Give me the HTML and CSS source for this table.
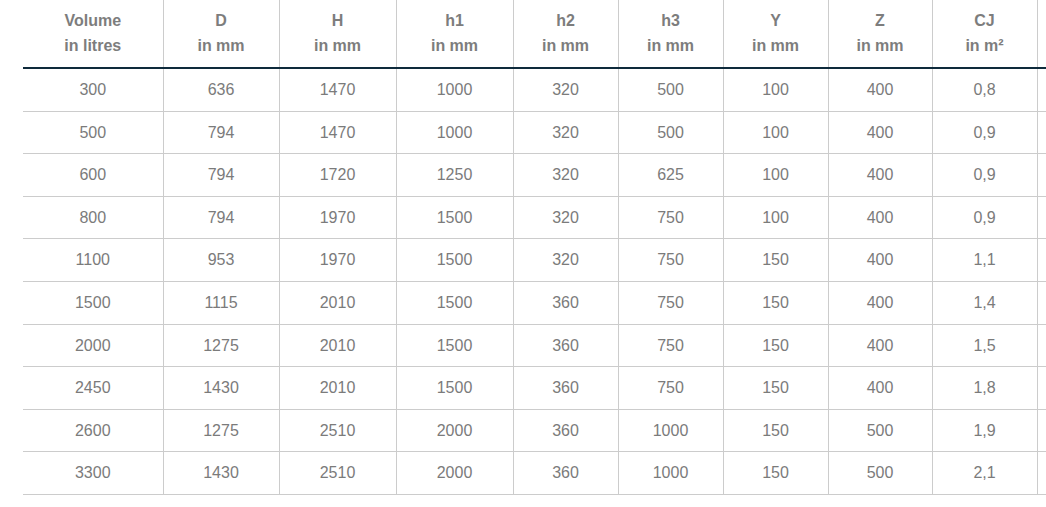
FILE: index.html
```html
<!DOCTYPE html>
<html lang="en">
<head>
<meta charset="utf-8">
<title>Dimensions</title>
<link rel="stylesheet" href="styles.css">
</head>
<body>
<div class="wrap">
<table class="dims">
<colgroup>
<col class="c1"><col class="c2"><col class="c3"><col class="c4"><col class="c5"><col class="c6"><col class="c7"><col class="c8"><col class="c9"><col class="c10">
</colgroup>
<thead>
<tr>
<th>Volume<br>in litres</th>
<th>D<br>in mm</th>
<th>H<br>in mm</th>
<th>h1<br>in mm</th>
<th>h2<br>in mm</th>
<th>h3<br>in mm</th>
<th>Y<br>in mm</th>
<th>Z<br>in mm</th>
<th>CJ<br>in m²</th>
<th></th>
</tr>
</thead>
<tbody>
<tr><td>300</td><td>636</td><td>1470</td><td>1000</td><td>320</td><td>500</td><td>100</td><td>400</td><td>0,8</td><td></td></tr>
<tr><td>500</td><td>794</td><td>1470</td><td>1000</td><td>320</td><td>500</td><td>100</td><td>400</td><td>0,9</td><td></td></tr>
<tr><td>600</td><td>794</td><td>1720</td><td>1250</td><td>320</td><td>625</td><td>100</td><td>400</td><td>0,9</td><td></td></tr>
<tr><td>800</td><td>794</td><td>1970</td><td>1500</td><td>320</td><td>750</td><td>100</td><td>400</td><td>0,9</td><td></td></tr>
<tr><td>1100</td><td>953</td><td>1970</td><td>1500</td><td>320</td><td>750</td><td>150</td><td>400</td><td>1,1</td><td></td></tr>
<tr><td>1500</td><td>1115</td><td>2010</td><td>1500</td><td>360</td><td>750</td><td>150</td><td>400</td><td>1,4</td><td></td></tr>
<tr><td>2000</td><td>1275</td><td>2010</td><td>1500</td><td>360</td><td>750</td><td>150</td><td>400</td><td>1,5</td><td></td></tr>
<tr><td>2450</td><td>1430</td><td>2010</td><td>1500</td><td>360</td><td>750</td><td>150</td><td>400</td><td>1,8</td><td></td></tr>
<tr><td>2600</td><td>1275</td><td>2510</td><td>2000</td><td>360</td><td>1000</td><td>150</td><td>500</td><td>1,9</td><td></td></tr>
<tr><td>3300</td><td>1430</td><td>2510</td><td>2000</td><td>360</td><td>1000</td><td>150</td><td>500</td><td>2,1</td><td></td></tr>
</tbody>
</table>
</div>
</body>
</html>
```
FILE: styles.css
```css
html, body {
  margin: 0;
  padding: 0;
  background: #ffffff;
}
.wrap {
  padding-left: 23px;
}
.dims {
  border-collapse: collapse;
  table-layout: fixed;
  width: 1023px;
  font-family: "Liberation Sans", Arial, sans-serif;
  font-size: 16px;
  color: #7b7b7b;
}
.c1 { width: 140px; }
.c2 { width: 116px; }
.c3 { width: 117px; }
.c4 { width: 117px; }
.c5 { width: 105px; }
.c6 { width: 105px; }
.c7 { width: 105px; }
.c8 { width: 104px; }
.c9 { width: 105px; }
.c10 { width: 9px; }
.dims th {
  font-weight: bold;
  color: #7d7d7d;
  line-height: 25px;
  padding: 8px 0 9px;
  text-align: center;
  border-left: 1px solid #cccccc;
  border-bottom: 2px solid #0e2a3b;
}
.dims td {
  text-align: center;
  line-height: 25.6px;
  padding: 8px 0;
  border-left: 1px solid #cccccc;
  border-bottom: 1px solid #cccccc;
}
.dims th:first-child,
.dims td:first-child {
  border-left: none;
}
```
